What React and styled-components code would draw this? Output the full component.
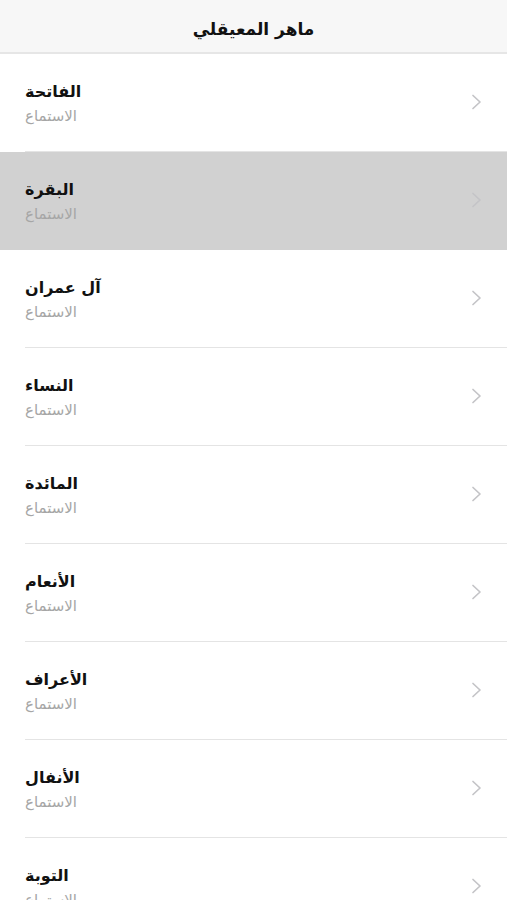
import React from "react";
import styled, { createGlobalStyle } from "styled-components";

const Global = createGlobalStyle`
  html, body { margin: 0; padding: 0; background: #ffffff; }
  body { font-family: "DejaVu Sans", "Noto Sans", sans-serif; -webkit-font-smoothing: antialiased; }
  * { box-sizing: border-box; }
`;

const Page = styled.div`
  width: 507px;
  height: 900px;
  overflow: hidden;
  background: #ffffff;
`;

const Header = styled.header`
  height: 54px;
  background: #f7f7f7;
  border-bottom: 2px solid #e6e6e6;
  display: flex;
  align-items: center;
  justify-content: center;
  padding-top: 6px;
`;

const HeaderTitle = styled.h1`
  margin: 0;
  font-size: 17px;
  font-weight: 700;
  color: #111111;
  direction: rtl;
`;

const List = styled.ul`
  list-style: none;
  margin: 0;
  padding: 0;
`;

const Row = styled.li`
  height: 98px;
  background: ${(p) => (p.$active ? "#d1d1d1" : "#ffffff")};
  padding-left: 25px;
  display: flex;
`;

const RowInner = styled.div`
  flex: 1;
  display: flex;
  align-items: center;
  justify-content: space-between;
  border-bottom: 1px solid ${(p) => (p.$active ? "#d1d1d1" : "#e4e4e4")};
  padding-right: 24px;
`;

const Texts = styled.div`
  display: flex;
  flex-direction: column;
  align-items: flex-start;
  gap: 5px;
  margin-top: 2px;
`;

const Title = styled.span`
  direction: rtl;
  font-size: 16px;
  font-weight: 700;
  color: #111111;
  line-height: 20px;
`;

const Subtitle = styled.span`
  direction: rtl;
  font-size: 15px;
  color: #a6a6a6;
  line-height: 18px;
`;

const ChevronIcon = styled.svg`
  margin-top: -2px;
`;

const Chevron = () => (
  <ChevronIcon width="12" height="16" viewBox="0 0 12 16" fill="none">
    <path d="M2 1.5 L9 8 L2 14.5" stroke="#c4c4c7" strokeWidth="1.7" strokeLinecap="round" strokeLinejoin="round" />
  </ChevronIcon>
);

const suras = ["الفاتحة", "البقرة", "آل عمران", "النساء", "المائدة", "الأنعام", "الأعراف", "الأنفال", "التوبة"];

export default function App() {
  return (
    <Page>
      <Global />
      <Header>
        <HeaderTitle>ماهر المعيقلي</HeaderTitle>
      </Header>
      <List>
        {suras.map((s, i) => (
          <Row key={s} $active={i === 1}>
            <RowInner $active={i === 1}>
              <Texts>
                <Title>{s}</Title>
                <Subtitle>الاستماع</Subtitle>
              </Texts>
              <Chevron />
            </RowInner>
          </Row>
        ))}
      </List>
    </Page>
  );
}
